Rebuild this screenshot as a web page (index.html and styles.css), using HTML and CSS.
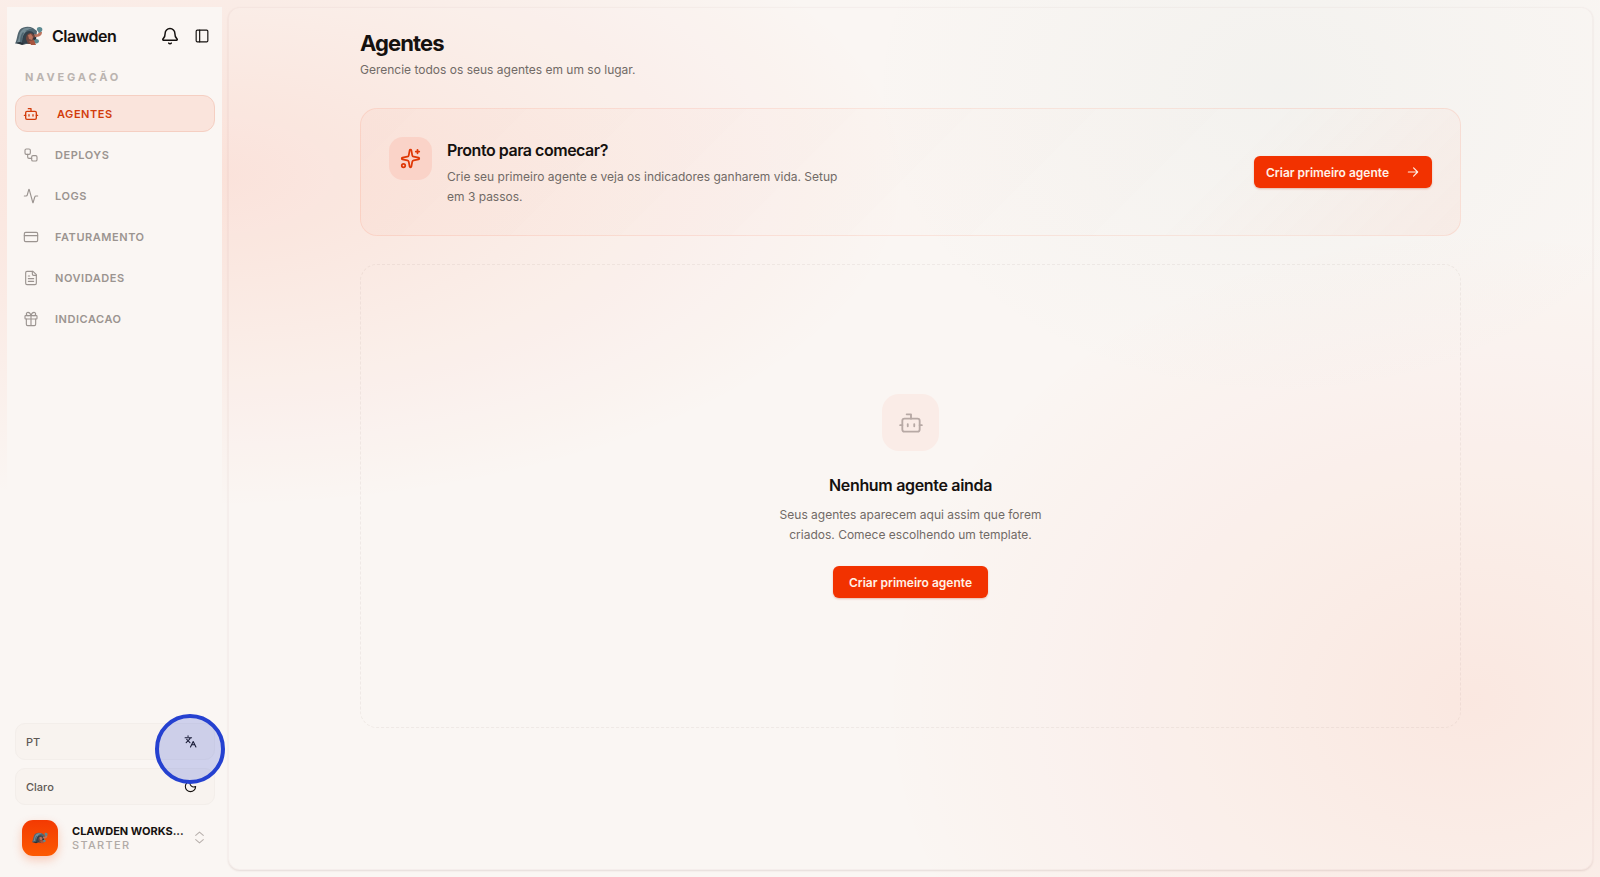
FILE: index.html
```html
<!DOCTYPE html>
<html lang="pt-BR">
<head>
<meta charset="utf-8">
<meta name="viewport" content="width=device-width, initial-scale=1">
<title>Agentes</title>
<link rel="stylesheet" href="styles.css">
</head>
<body>
<svg class="sprite" aria-hidden="true">
  <symbol id="bot" viewBox="0 0 24 24"><path d="M12 8V4H8"/><rect width="16" height="12" x="4" y="8" rx="2"/><path d="M2 14h2M20 14h2M15 13v2M9 13v2"/></symbol>
  <symbol id="mascot" viewBox="0 0 28 20">
    <g stroke="none">
      <path fill="#52656f" d="M0 17.500C2 15 2 7 5 3.500 8 .5 14 0 18 2l4 3-1 10-9 3z"/>
      <path fill="#758c95" d="M2 16C5 12 3 8 7 4c2-2 7-3 10-1.500-6 .5-9 5-9 13.500z"/>
      <path fill="#33414b" d="M7 17c0-7 2-11 7-12 4 0 7 3 6 9l-3 4z"/>
      <path fill="#506772" d="M5 16c0-5 1-8 3-10l1 1c-2 3-2 6-2 10zM10 5l7-2 3 2-5 0z"/>
      <path fill="#70463d" d="M11 13c0-4 2-6 5-6 2 1 4 2 4 6l-3 5-4 0z"/>
      <path fill="#bd745e" d="M13 9l3-1 2 3-1 3-3-1zM19 8c3 1 5 0 5-3l3 1c0 4-3 5-7 5z"/>
      <path fill="#5d8b92" d="M22 4c-1-3 3-4 5-2 1 2 0 4-3 5zM19 14c2-2 5-1 5 1s-2 3-5 2z"/>
      <path fill="#a9563f" d="M14 15l5-1 2 5-5 0z"/>
      <path fill="#263139" d="M1 17l4-1 6 2-4 1zM18 12l3-1 0 2-2 1z"/>
    </g>
  </symbol>
</svg>
<div class="app">
  <aside class="sidebar">
    <header class="brand">
      <svg class="brand-logo"><use href="#mascot"/></svg>
      <span class="brand-name">Clawden</span>
      <button class="icon-button" type="button" aria-label="Notificações">
        <svg class="icon icon-bell" viewBox="0 0 24 24"><path d="M10.3 21.500a2 2 0 0 0 3.400 0"/><path d="M3 15.500A1 1 0 0 0 3.800 17.500h16.400a1 1 0 0 0 .8-2C19.400 14 18.500 12.500 18.500 8.500a6.500 6.500 0 0 0-13 0C5.500 12.500 4.600 14 3 15.500"/></svg>
      </button>
      <button class="icon-button" type="button" aria-label="Recolher menu">
        <svg class="icon icon-panel" viewBox="0 0 24 24"><rect width="20" height="20" x="2" y="2" rx="2"/><path d="M8 2v20"/></svg>
      </button>
    </header>
    <nav class="nav" aria-label="Navegação">
      <p class="nav-heading">NAVEGAÇÃO</p>
      <a class="nav-item nav-item-active" href="#agentes" aria-current="page"><svg class="icon"><use href="#bot"/></svg><span>AGENTES</span></a>
      <a class="nav-item" href="#deploys"><svg class="icon" viewBox="0 0 24 24"><rect width="8" height="8" x="3" y="3" rx="2"/><path d="M7 11v4a2 2 0 0 0 2 2h4"/><rect width="8" height="8" x="13" y="13" rx="2"/></svg><span>DEPLOYS</span></a>
      <a class="nav-item" href="#logs"><svg class="icon" viewBox="0 0 24 24"><path d="M22 12h-2.500a2 2 0 0 0-1.900 1.500l-2.400 8.300a.25.25 0 0 1-.48 0L9.240 2.180a.25.25 0 0 0-.48 0l-2.350 8.360A2 2 0 0 1 4.490 12H2"/></svg><span>LOGS</span></a>
      <a class="nav-item" href="#faturamento"><svg class="icon" viewBox="0 0 24 24"><rect width="20" height="14" x="2" y="5" rx="2"/><path d="M2 10h20"/></svg><span>FATURAMENTO</span></a>
      <a class="nav-item" href="#novidades"><svg class="icon" viewBox="0 0 24 24"><path d="M15 2H6a2 2 0 0 0-2 2v16a2 2 0 0 0 2 2h12a2 2 0 0 0 2-2V7Z"/><path d="M14 2v4a2 2 0 0 0 2 2h4M10 9H8M16 13H8M16 17H8"/></svg><span>NOVIDADES</span></a>
      <a class="nav-item" href="#indicacao"><svg class="icon" viewBox="0 0 24 24"><rect x="3" y="7" width="18" height="5" rx="1"/><path d="M12 7v15M19 12v8a2 2 0 0 1-2 2H7a2 2 0 0 1-2-2v-8M7.500 7a2.500 2.500 0 0 1 0-5C11 2 12 7 12 7s1-5 4.500-5a2.500 2.500 0 0 1 0 5"/></svg><span>INDICACAO</span></a>
    </nav>
    <footer class="sidebar-footer">
      <button class="setting" type="button"><span>PT</span>
        <svg class="icon" viewBox="0 0 24 24"><path d="m5 8 6 6M4 14l6-6 2-3M2 5h12M7 2h1M22 22l-5-10-5 10M14 18h6"/></svg>
        <span class="click-marker"></span>
      </button>
      <button class="setting" type="button"><span>Claro</span>
        <svg class="icon" viewBox="0 0 24 24"><path d="M12 2.500a7 7 0 0 0 9.500 9.500A9.500 9.500 0 1 1 12 2.500Z"/></svg>
      </button>
      <button class="workspace" type="button">
        <span class="avatar"><svg class="avatar-logo"><use href="#mascot"/></svg></span>
        <span class="workspace-text"><strong class="workspace-name">CLAWDEN WORKS...</strong><span class="workspace-plan">STARTER</span></span>
        <svg class="icon chevrons" viewBox="0 0 24 24"><path d="m5 8 7-6 7 6M5 16l7 6 7-6"/></svg>
      </button>
    </footer>
  </aside>
  <main class="panel">
    <div class="content">
      <header class="page-header">
        <h1>Agentes</h1>
        <p class="body-text">Gerencie todos os seus agentes em um so lugar.</p>
      </header>
      <section class="hero">
        <span class="hero-icon"><svg class="icon" viewBox="0 0 24 24"><path d="M11.017 2.814a1 1 0 0 1 1.966 0l1.051 5.558a2 2 0 0 0 1.594 1.594l5.558 1.051a1 1 0 0 1 0 1.966l-5.558 1.051a2 2 0 0 0-1.594 1.594l-1.051 5.558a1 1 0 0 1-1.966 0l-1.051-5.558a2 2 0 0 0-1.594-1.594l-5.558-1.051a1 1 0 0 1 0-1.966l5.558-1.051a2 2 0 0 0 1.594-1.594zM20 2v4M22 4h-4"/><circle cx="4" cy="20" r="2"/></svg></span>
        <div class="hero-text">
          <h2>Pronto para comecar?</h2>
          <p class="body-text">Crie seu primeiro agente e veja os indicadores ganharem vida. Setup em 3 passos.</p>
        </div>
        <button class="primary primary-arrow" type="button"><span>Criar primeiro agente</span><svg class="icon" viewBox="0 0 24 24"><path d="M4 12h16M13 5l7 7-7 7"/></svg></button>
      </section>
      <section class="empty">
        <span class="empty-icon"><svg class="icon"><use href="#bot"/></svg></span>
        <h3>Nenhum agente ainda</h3>
        <p class="body-text">Seus agentes aparecem aqui assim que forem criados. Comece escolhendo um template.</p>
        <button class="primary" type="button">Criar primeiro agente</button>
      </section>
    </div>
  </main>
</div>
</body>
</html>
```
FILE: styles.css
```css
* { box-sizing: border-box; }

body {
  margin: 0;
  color: #15110f;
  font-family: Inter, "Liberation Sans", sans-serif;
  font-size: 12px;
  background:
    radial-gradient(ellipse 44% 38% at 13% 20%, rgba(255, 75, 25, 0.12), transparent),
    radial-gradient(ellipse 26% 36% at 80% 10%, rgba(90, 150, 140, 0.045), transparent),
    radial-gradient(ellipse 37% 54% at 92% 80%, rgba(255, 75, 25, 0.09), transparent),
    #faf6f3;
}

h1, h2, h3, p { margin: 0; }

button {
  margin: 0;
  padding: 0;
  border: 0;
  background: none;
  color: inherit;
  font: inherit;
  cursor: pointer;
}

.sprite { position: absolute; width: 0; height: 0; }

.icon {
  flex: none;
  width: 14px;
  height: 14px;
  fill: none;
  stroke: currentColor;
  stroke-width: 2;
  stroke-linecap: round;
  stroke-linejoin: round;
}

.app {
  display: flex;
  gap: 6px;
  min-height: 100vh;
  padding: 7px;
}

.sidebar {
  display: flex;
  flex: none;
  flex-direction: column;
  width: 215px;
  padding: 14px 7px 8px 8px;
  background: #faf6f3;
}

.brand {
  display: flex;
  align-items: center;
  height: 30px;
}

.brand-logo { flex: none; width: 28px; height: 20px; }

.brand-name {
  flex: 1;
  margin-left: 9px;
  font-size: 16px;
  font-weight: 600;
  letter-spacing: -0.03em;
}

.icon-button { display: grid; place-items: center; width: 32px; height: 30px; }
.icon-button:last-child { margin-right: -3px; }
.icon-bell { width: 18px; height: 18px; }

.nav { display: flex; flex-direction: column; gap: 4px; }

.nav-heading {
  padding: 19px 10px 6px;
  color: #bbb4b0;
  font-size: 11px;
  font-weight: 700;
  line-height: 15px;
  letter-spacing: 0.26em;
}

.nav-item {
  display: flex;
  align-items: center;
  gap: 16px;
  height: 37px;
  padding: 0 7px;
  border: 1px solid transparent;
  border-radius: 12px;
  color: #9b9490;
  font-size: 11px;
  font-weight: 600;
  letter-spacing: 0.05em;
  text-decoration: none;
}

.nav-item .icon { width: 16px; height: 16px; }

.nav-item-active {
  gap: 18px;
  border-color: #f5cfc2;
  background: #fae4dc;
  color: #d23c0c;
}

.nav-item:not(.nav-item-active) .icon { stroke-width: 1.700; }

.sidebar-footer {
  display: flex;
  flex-direction: column;
  gap: 8px;
  margin-top: auto;
}

.setting {
  position: relative;
  display: flex;
  align-items: center;
  justify-content: space-between;
  height: 37px;
  padding: 0 17px 0 10px;
  border: 1px solid #f3eeea;
  border-radius: 10px;
  background: #f8f3ef;
  color: #15110f;
  font-size: 11px;
  font-weight: 500;
}

.setting > span { color: #5f5955; }
.setting .icon { width: 13px; height: 13px; }

.click-marker {
  position: absolute;
  z-index: 1;
  top: -10px;
  right: -11px;
  width: 70px;
  height: 70px;
  border: 4px solid #2541d0;
  border-radius: 50%;
  background: rgba(37, 65, 208, 0.2);
}

.workspace {
  display: flex;
  align-items: center;
  height: 49px;
  padding: 0 9px 0 7px;
  text-align: left;
}

.avatar {
  display: grid;
  flex: none;
  place-items: center;
  width: 36px;
  height: 36px;
  border-radius: 11px;
  background: linear-gradient(180deg, #f33a02, #fc5a02);
  box-shadow: 0 4px 10px rgba(245, 70, 10, 0.25);
}

.avatar-logo { width: 16px; height: 12px; }

.workspace-text {
  display: flex;
  flex: 1;
  flex-direction: column;
  min-width: 0;
  margin-left: 14px;
  font-size: 11px;
  line-height: 14px;
  white-space: nowrap;
}

.workspace-name { font-weight: 700; }
.workspace-plan { color: #b1aaa6; font-weight: 500; letter-spacing: 0.12em; }
.chevrons { width: 13px; height: 13px; color: #b8b1ad; }

.panel {
  flex: 1;
  min-width: 0;
  padding: 23px 29px;
  border: 1px solid rgba(120, 60, 40, 0.04);
  border-radius: 12px;
  background: rgba(255, 250, 248, 0.06);
  box-shadow: 0 1px 2px rgba(90, 50, 40, 0.13);
}

.content {
  display: flex;
  flex-direction: column;
  gap: 28px;
  max-width: 1101px;
  margin: 0 auto;
}

h1 {
  font-size: 22px;
  font-weight: 700;
  line-height: 24px;
  letter-spacing: -0.04em;
}

.body-text { color: #716a66; line-height: 20px; }
.page-header .body-text { margin-top: 5px; }

.hero {
  display: flex;
  align-items: center;
  min-height: 128px;
  padding: 28px;
  border: 1px solid rgba(255, 75, 25, 0.1);
  border-radius: 17px;
  background: linear-gradient(135deg, rgba(255, 75, 25, 0.03), rgba(255, 75, 25, 0.01) 45%, rgba(255, 75, 25, 0) 75%, rgba(255, 75, 25, 0.05));
}

.hero-icon, .empty-icon { display: grid; flex: none; place-items: center; }

.hero-icon {
  align-self: flex-start;
  width: 43px;
  height: 43px;
  border-radius: 14px;
  background: #fad3c8;
  color: #df3806;
}

.hero-icon .icon { width: 21px; height: 21px; }
.hero-text { max-width: 405px; margin: 0 auto 0 15px; padding-top: 2px; }

h2 {
  margin-bottom: 6px;
  font-size: 16px;
  font-weight: 600;
  line-height: 22px;
  letter-spacing: -0.03em;
}

.primary {
  height: 32px;
  padding: 0 16px;
  border-radius: 6px;
  background: #f23200;
  box-shadow: 0 1px 2px rgba(190, 50, 10, 0.3);
  color: #fff1e6;
  font-weight: 600;
}

.primary-arrow {
  display: flex;
  flex: none;
  align-items: center;
  gap: 17px;
  padding: 0 12px;
}

.empty {
  display: flex;
  flex-direction: column;
  align-items: center;
  justify-content: center;
  min-height: 464px;
  border: 1px dashed rgba(120, 90, 75, 0.08);
  border-radius: 17px;
  text-align: center;
}

.empty-icon {
  width: 57px;
  height: 57px;
  border-radius: 17px;
  background: #faece7;
  color: #b7a9a5;
}

.empty-icon .icon { width: 26px; height: 26px; stroke-width: 1.700; }

h3 {
  margin: 23px 0 9px;
  font-size: 16px;
  font-weight: 600;
  line-height: 22px;
  letter-spacing: -0.02em;
}

.empty .body-text { max-width: 280px; margin-bottom: 21px; }
```
